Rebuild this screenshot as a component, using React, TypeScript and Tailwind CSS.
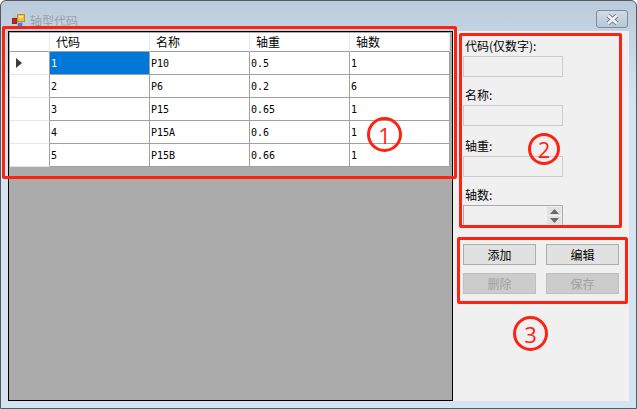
const cjk = "font-['Noto_Sans_CJK_SC',sans-serif]"

const columns = ['代码', '名称', '轴重', '轴数']
const rows = [
  ['1', 'P10', '0.5', '1'],
  ['2', 'P6', '0.2', '6'],
  ['3', 'P15', '0.65', '1'],
  ['4', 'P15A', '0.6', '1'],
  ['5', 'P15B', '0.66', '1'],
]

function AppIcon() {
  return (
    <svg width="14" height="13" viewBox="0 0 14 13" className="shrink-0">
      <path d="M0.5 3 H4.5 M2.5 0 V3.5" stroke="#b9c0c8" />
      <rect x="5.5" y="0.5" width="7" height="7" fill="#f4c136" stroke="#b8912e" />
      <rect x="7" y="2" width="4" height="2" fill="#fbe49a" />
      <rect x="0.5" y="4.5" width="4" height="5" fill="#c8241c" stroke="#8a2a24" />
      <rect x="5.5" y="8.5" width="5" height="4" fill="#3f7fe6" stroke="#9db6de" />
    </svg>
  )
}

function CloseButton() {
  return (
    <div className="flex h-[18px] w-[32px] items-center justify-center rounded-[3px] border border-[#7f8c9c] bg-gradient-to-b from-[#cfdbe7] to-[#b8c7d7]">
      <svg width="15" height="11" viewBox="0 0 15 11">
        <path d="M3 1.5 L12 9.5 M12 1.5 L3 9.5" stroke="#6b7682" strokeWidth="4.4" />
        <path d="M3 1.5 L12 9.5 M12 1.5 L3 9.5" stroke="#f2f5f8" strokeWidth="2.6" />
      </svg>
    </div>
  )
}

function DataGrid() {
  return (
    <div className="h-[370px] w-[445px] shrink-0 border border-black bg-[#ababab] pl-px pt-px">
      <div className="grid w-[440px] grid-cols-[40px_repeat(4,100px)] bg-white text-black">
        <div className="h-[19px] border-r border-b border-r-[#e8e8e8] border-b-[#a0a0a0]" />
        {columns.map((c) => (
          <div
            key={c}
            className={`${cjk} h-[19px] border-r border-b border-r-[#e8e8e8] border-b-[#a0a0a0] pl-[6px] text-[12px] leading-[18px]`}
          >
            {c}
          </div>
        ))}
        {rows.map((row, i) => (
          <div key={row[0]} className="contents">
            <div className="flex h-[23px] items-center border-r border-b border-r-[#a0a0a0] border-b-[#e4e4e4] pl-[6px]">
              {i === 0 && (
                <svg width="6" height="10" viewBox="0 0 6 10">
                  <path d="M0 0 L6 5 L0 10 Z" fill="#3c3c3c" />
                </svg>
              )}
            </div>
            {row.map((v, j) => (
              <div
                key={j}
                className={`flex h-[23px] items-center border-r border-b border-[#a0a0a0] pl-px font-['DejaVu_Sans_Mono',monospace] text-[10px] ${
                  i === 0 && j === 0 ? 'bg-[#0078d7] text-white' : ''
                }`}
              >
                {v}
              </div>
            ))}
          </div>
        ))}
      </div>
    </div>
  )
}

function Field({ label, spinner, className }: { label: string; spinner?: boolean; className: string }) {
  return (
    <div className={`flex flex-col ${className}`}>
      <div className={`${cjk} ml-[2px] h-[17px] text-[12px] leading-[14px] text-black`}>{label}</div>
      <div
        className={`flex h-[21px] w-[100px] justify-end border bg-[#f0f0f0] ${
          spinner ? 'border-[#ababab] p-px' : 'border-[#cccccc]'
        }`}
      >
        {spinner && (
          <div className="flex w-[14px] flex-col gap-px">
            <div className="flex flex-1 items-center justify-center bg-[#e2e2e2]">
              <svg width="9" height="5" viewBox="0 0 9 5">
                <path d="M4.5 0 L9 5 L0 5 Z" fill="#6a6a6a" />
              </svg>
            </div>
            <div className="flex flex-1 items-center justify-center bg-[#e2e2e2]">
              <svg width="9" height="5" viewBox="0 0 9 5">
                <path d="M0 0 L9 0 L4.5 5 Z" fill="#6a6a6a" />
              </svg>
            </div>
          </div>
        )}
      </div>
    </div>
  )
}

function WinButton({ label, disabled }: { label: string; disabled?: boolean }) {
  return (
    <button
      className={`${cjk} h-[21px] w-[73px] border text-[12px] leading-[19px] ${
        disabled
          ? 'border-[#bfbfbf] bg-[#cccccc] text-[#a0a0a0]'
          : 'border-[#adadad] bg-[#e1e1e1] text-black'
      }`}
    >
      {label}
    </button>
  )
}

function Callout({ n, className }: { n: string; className: string }) {
  return (
    <div
      className={`absolute flex items-center justify-center rounded-full border-[3px] border-[#ff2213] font-['Open_Sans',sans-serif] text-[22px] leading-none text-[#ff2213] ${className}`}
    >
      {n}
    </div>
  )
}

export default function App() {
  return (
    <div className="relative h-[409px] w-[637px] overflow-hidden rounded-t-[6px] border border-[#555a60] bg-gradient-to-b from-[#bccbdb] from-0% to-[#d6e4f2] to-[25%]">
      {/* Title bar */}
      <div className="flex h-[30px] items-start justify-between pl-[11px] pr-[8px]">
        <div className="mt-[12px] flex items-center gap-[4px]">
          <AppIcon />
          <span className={`${cjk} text-[12px] leading-[15px] text-[#98a1ab]`}>轴型代码</span>
        </div>
        <div className="mt-[9px]">
          <CloseButton />
        </div>
      </div>

      {/* Client area */}
      <div className="ml-[7px] flex h-[370px] w-[621px] bg-[#f0f0f0]">
        <DataGrid />
        <div className="flex flex-col pl-[10px]">
          <Field label="代码(仅数字):" className="mt-[8px]" />
          <Field label="名称:" className="mt-[11px]" />
          <Field label="轴重:" className="mt-[13px]" />
          <Field label="轴数:" spinner className="mt-[11px]" />
          <div className="mt-[18px] grid grid-cols-[73px_73px] gap-x-[10px] gap-y-[8px]">
            <WinButton label="添加" />
            <WinButton label="编辑" />
            <WinButton label="删除" disabled />
            <WinButton label="保存" disabled />
          </div>
        </div>
      </div>

      {/* Red annotations drawn over the screenshot */}
      <div className="absolute left-[1px] top-[25px] h-[153px] w-[455px] rounded-[2px] border-[3px] border-[#ff2213]" />
      <div className="absolute left-[458px] top-[32px] h-[195px] w-[163px] rounded-[2px] border-[3px] border-[#ff2213]" />
      <div className="absolute left-[456px] top-[236px] h-[67px] w-[171px] rounded-[2px] border-[3px] border-[#ff2213]" />
      <Callout n="1" className="left-[366px] top-[116px] h-[35px] w-[35px]" />
      <Callout n="2" className="left-[527px] top-[132px] h-[32px] w-[32px]" />
      <Callout n="3" className="left-[512px] top-[315px] h-[35px] w-[35px]" />
    </div>
  )
}
